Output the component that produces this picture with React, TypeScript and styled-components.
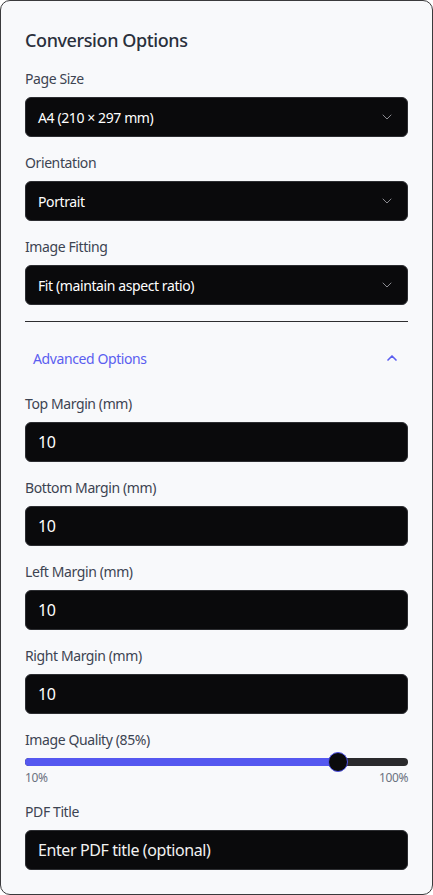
import React from "react";
import styled, { createGlobalStyle } from "styled-components";

const Global = createGlobalStyle`
  html, body { margin: 0; padding: 0; background: #ffffff; }
  * { box-sizing: border-box; }
  body { font-family: "Noto Sans", "Open Sans", sans-serif; letter-spacing: -0.025em; }
`;

const Card = styled.div`
  width: 433px;
  background: #f8f9fb;
  border: 1px solid #3a3a3c;
  border-radius: 10px;
  padding: 25px 24px 24px;
  display: flex;
  flex-direction: column;
`;

const Title = styled.h2`
  margin: 0 0 15px;
  font-size: 18px;
  line-height: 28px;
  font-weight: 500;
  color: #2a303c;
`;

const Stack = styled.div`
  display: flex;
  flex-direction: column;
  gap: 16px;
`;

const Field = styled.div`
  display: flex;
  flex-direction: column;
  gap: 8px;
`;

const Label = styled.label`
  font-size: 14px;
  line-height: 20px;
  font-weight: 400;
  color: #3d4452;
`;

const SelectBox = styled.div`
  height: 40px;
  display: flex;
  align-items: center;
  justify-content: space-between;
  padding: 0 12px;
  background: #0a0a0c;
  border: 1px solid #2c2d31;
  border-radius: 6px;
  color: #ffffff;
  font-size: 14px;
`;

const InputBox = styled.div<{ $muted?: boolean }>`
  height: 40px;
  display: flex;
  align-items: center;
  padding: 0 12px;
  background: #0a0a0c;
  border: 1px solid #2c2d31;
  border-radius: 6px;
  color: ${(p) => (p.$muted ? "#f2f2f2" : "#ffffff")};
  font-size: 16px;
`;

const Divider = styled.hr`
  margin: 0;
  border: none;
  border-top: 1px solid #2e2e30;
`;

const ToggleButton = styled.button`
  height: 40px;
  display: flex;
  align-items: center;
  justify-content: space-between;
  padding: 0 8px;
  background: transparent;
  border: none;
  font-family: inherit;
  letter-spacing: inherit;
  font-size: 14px;
  font-weight: 400;
  color: #5b5ef0;
  cursor: pointer;
`;

const SliderWrap = styled.div`
  display: flex;
  flex-direction: column;
  gap: 4px;
`;

const Track = styled.div`
  position: relative;
  height: 8px;
  border-radius: 4px;
  background: #2a2a2c;
`;

const Fill = styled.div`
  height: 100%;
  border-radius: 4px;
  background: #5558f0;
`;

const Thumb = styled.div`
  position: absolute;
  top: 50%;
  width: 20px;
  height: 20px;
  margin-left: -10px;
  margin-top: -10px;
  border-radius: 50%;
  background: #0a0a0c;
  border: 1px solid #4f52e8;
`;

const RangeLabels = styled.div`
  display: flex;
  justify-content: space-between;
  font-size: 12px;
  line-height: 16px;
  color: #6b7280;
`;

const Chevron = ({ up, color }: { up?: boolean; color: string }) => (
  <svg width="16" height="16" viewBox="0 0 24 24" fill="none" stroke={color} strokeWidth={up ? 2.5 : 1.5} strokeLinecap="round" strokeLinejoin="round">
    <path d={up ? "m18 15-6-6-6 6" : "m6 9 6 6 6-6"} />
  </svg>
);

const selects = [
  { label: "Page Size", value: "A4 (210 × 297 mm)" },
  { label: "Orientation", value: "Portrait" },
  { label: "Image Fitting", value: "Fit (maintain aspect ratio)" },
];

const margins = ["Top Margin (mm)", "Bottom Margin (mm)", "Left Margin (mm)", "Right Margin (mm)"];

export default function App() {
  const quality = 85;
  const frac = (quality - 10) / 90;
  return (
    <>
      <Global />
      <Card>
        <Title>Conversion Options</Title>
        <Stack>
          {selects.map((s) => (
            <Field key={s.label}>
              <Label>{s.label}</Label>
              <SelectBox>
                <span>{s.value}</span>
                <Chevron color="#8a8a90" />
              </SelectBox>
            </Field>
          ))}
          <Divider />
          <ToggleButton>
            <span>Advanced Options</span>
            <Chevron up color="#5b5ef0" />
          </ToggleButton>
          {margins.map((m) => (
            <Field key={m}>
              <Label>{m}</Label>
              <InputBox>10</InputBox>
            </Field>
          ))}
          <Field>
            <Label>Image Quality ({quality}%)</Label>
            <SliderWrap>
              <Track>
                <Fill style={{ width: `calc(10px + ${frac} * (100% - 20px))` }} />
                <Thumb style={{ left: `calc(10px + ${frac} * (100% - 20px))` }} />
              </Track>
              <RangeLabels>
                <span>10%</span>
                <span>100%</span>
              </RangeLabels>
            </SliderWrap>
          </Field>
          <Field>
            <Label>PDF Title</Label>
            <InputBox $muted>Enter PDF title (optional)</InputBox>
          </Field>
        </Stack>
      </Card>
    </>
  );
}
